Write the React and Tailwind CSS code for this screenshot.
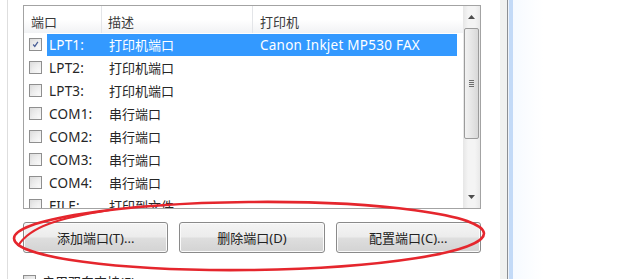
import React from "react";

const FONT = { fontFamily: '"Noto Sans", "Noto Sans CJK SC", sans-serif' };

function CheckBox({ checked }) {
  return (
    <div className="w-[13px] h-[13px] shrink-0 border border-[#8f8f8f] bg-gradient-to-br from-[#dcdcdc] to-[#fbfbfb] p-[2px] flex items-center justify-center">
      <div className="w-full h-full bg-gradient-to-br from-[#e4e4e4] to-[#f8f8f8] flex items-center justify-center">
        {checked && (
          <svg width="9" height="9" viewBox="0 0 9 9">
            <path d="M1.5 4.5 L3.6 7 L7.6 1.2" stroke="#4a5f97" strokeWidth="1.6" fill="none" />
          </svg>
        )}
      </div>
    </div>
  );
}

const rows = [
  ["LPT1:", "打印机端口", "Canon Inkjet MP530 FAX", true],
  ["LPT2:", "打印机端口", "", false],
  ["LPT3:", "打印机端口", "", false],
  ["COM1:", "串行端口", "", false],
  ["COM2:", "串行端口", "", false],
  ["COM3:", "串行端口", "", false],
  ["COM4:", "串行端口", "", false],
  ["FILE:", "打印到文件", "", false],
];

function Row({ port, desc, printer, sel }) {
  const c = sel ? "text-white" : "text-[#262626]";
  return (
    <div className="relative h-[23px] flex items-center shrink-0">
      <div className="absolute left-[5px] top-[5px]">
        <CheckBox checked={sel} />
      </div>
      {sel && <div className="absolute left-[23px] top-[1px] w-[410px] h-[22px] bg-[#3399ff]" />}
      <span className={`absolute left-[25px] top-[3px] text-[13.5px] tracking-[0.2px] ${c}`}>{port}</span>
      <span className={`absolute left-[85px] top-[3px] ${c}`}>{desc}</span>
      <span className={`absolute left-[236px] top-[3px] text-[13.5px] tracking-[0.25px] ${c}`}>{printer}</span>
    </div>
  );
}

function Button({ children }) {
  return (
    <div className="h-[31px] rounded-[3px] border border-[#8a8a8a] bg-[linear-gradient(#f4f4f4,#ececec_48%,#dedede_52%,#d3d3d3)] shadow-[inset_0_0_0_1px_#fbfbfb] flex items-center justify-center text-[#222] text-[13px]">
      {children}
    </div>
  );
}

function Scrollbar() {
  return (
    <div className="w-[17px] h-full shrink-0 bg-[linear-gradient(90deg,#e6e6e6,#f4f4f4_30%,#f4f4f4_70%,#e9e9e9)] flex flex-col items-center">
      <div className="h-[22px] w-full flex items-center justify-center shrink-0">
        <svg width="7" height="4" viewBox="0 0 7 4"><path d="M0 4 L3.5 0 L7 4Z" fill="#4d4d4d" /></svg>
      </div>
      <div className="w-[15px] h-[111px] shrink-0 rounded-[2px] border border-[#9b9b9b] bg-[linear-gradient(90deg,#f2f2f2,#e6e6e6_50%,#d8d8d8)] flex items-center justify-center">
        <div className="flex flex-col gap-[1px]">
          <div className="w-[5px] h-[1px] bg-[#6d6d6d]" />
          <div className="w-[5px] h-[1px] bg-[#6d6d6d]" />
          <div className="w-[5px] h-[1px] bg-[#6d6d6d]" />
          <div className="w-[5px] h-[1px] bg-[#6d6d6d]" />
        </div>
      </div>
      <div className="flex-1" />
      <div className="h-[22px] w-full flex items-center justify-center shrink-0">
        <svg width="7" height="4" viewBox="0 0 7 4"><path d="M0 0 L3.5 4 L7 0Z" fill="#4d4d4d" /></svg>
      </div>
    </div>
  );
}

export default function App() {
  return (
    <div className="relative w-[620px] h-[279px] overflow-hidden bg-white flex text-[13px] leading-[18px]" style={FONT}>
      <div className="w-[7px] shrink-0 bg-white" />
      <div className="w-[493px] shrink-0 border-l border-[#dedede] bg-white pl-[15px] pt-[5px] flex flex-col">
        <div className="w-[458px] h-[204px] shrink-0 border border-[#a3a3a3] flex overflow-hidden">
          <div className="flex-1 flex flex-col overflow-hidden">
            <div className="relative h-[27px] shrink-0 bg-[linear-gradient(#ffffff,#ffffff_50%,#f1f2f4)] text-[#3a3a3a]">
              <span className="absolute left-[7px] top-[7px]">端口</span>
              <div className="absolute left-[77px] top-0 h-full w-[1px] bg-[#e3e5e8]" />
              <span className="absolute left-[84px] top-[7px]">描述</span>
              <div className="absolute left-[228px] top-0 h-full w-[1px] bg-[#e3e5e8]" />
              <span className="absolute left-[236px] top-[7px]">打印机</span>
            </div>
            {rows.map((r) => (
              <Row key={r[0]} port={r[0]} desc={r[1]} printer={r[2]} sel={r[3]} />
            ))}
          </div>
          <Scrollbar />
        </div>
        <div className="w-[458px] shrink-0 mt-[13px] grid grid-cols-3 gap-[11px]">
          <Button>添加端口(T)...</Button>
          <Button>删除端口(D)</Button>
          <Button>配置端口(C)...</Button>
        </div>
        <div className="mt-[22px] shrink-0 flex items-start gap-[6px] text-[#262626]">
          <CheckBox checked={false} />
          <span className="-mt-[2px]">启用双向支持(E)</span>
        </div>
      </div>
      <div className="w-[7px] shrink-0 bg-[#f0f1f0]" />
      <div className="w-[1px] shrink-0 bg-[#8c8f94]" />
      <div className="w-[1px] shrink-0 bg-[#eef3fa]" />
      <div className="w-[4px] shrink-0 bg-[#c3daf7]" />
      <div className="flex-1 bg-[linear-gradient(90deg,#f6faff,#ffffff_30px)]" />
      <svg className="absolute left-0 top-0 pointer-events-none" width="620" height="279" viewBox="0 0 620 279">
        <ellipse cx="249" cy="236" rx="235" ry="34" fill="none" stroke="#e5262d" strokeWidth="2.6" transform="rotate(-0.6 249 236)" />
        <path d="M18 246 C 30 226, 60 218, 110 210" fill="none" stroke="#e5262d" strokeWidth="2" />
      </svg>
    </div>
  );
}
